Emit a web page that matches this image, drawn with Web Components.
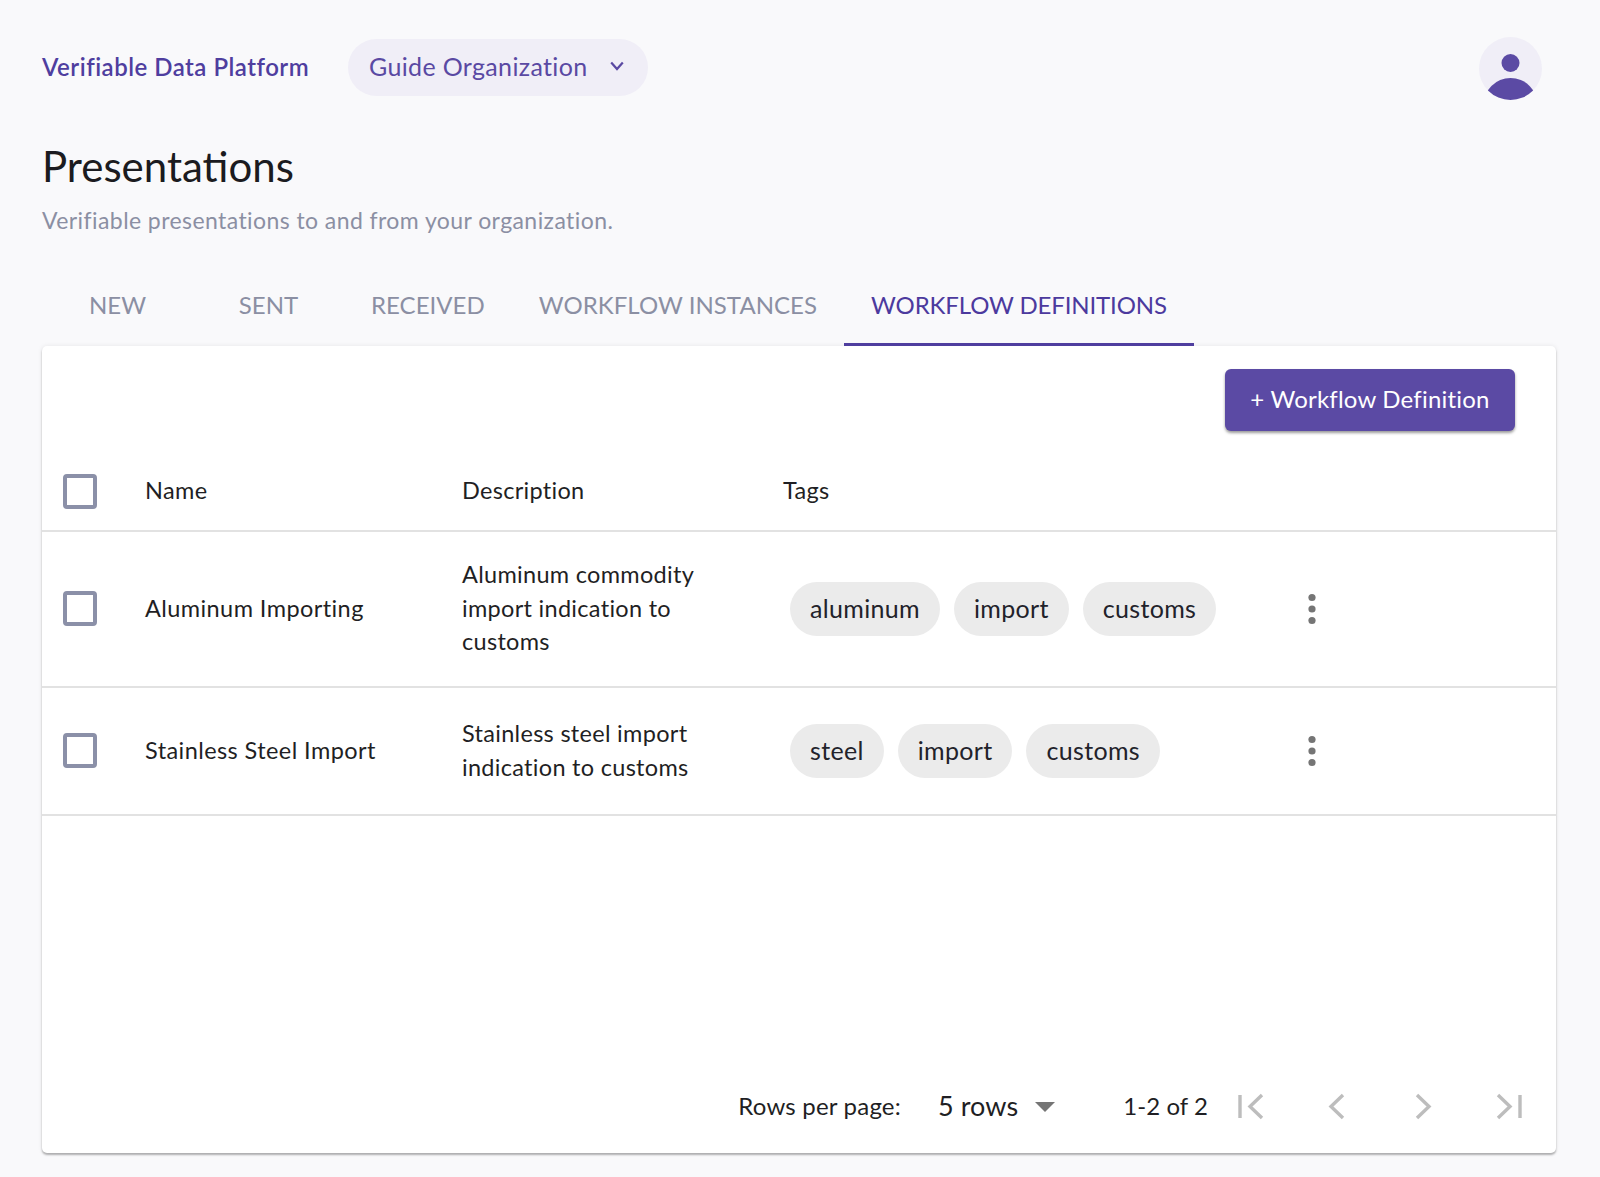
<!DOCTYPE html>
<html lang="en">
<head>
<meta charset="utf-8">
<title>Presentations</title>
<style>
  html, body { margin: 0; background: #f9f9fb; }
  body { font-family: Lato, "Noto Sans", sans-serif; color: #1c1c22; height: 1177px; overflow: hidden; }
</style>
</head>
<body>
<vdp-app>
  <top-bar brand="Verifiable Data Platform" org="Guide Organization"></top-bar>
  <page-heading title-text="Presentations">Verifiable presentations to and from your organization.</page-heading>
  <tab-bar>
    <tab-item>NEW</tab-item>
    <tab-item>SENT</tab-item>
    <tab-item>RECEIVED</tab-item>
    <tab-item>WORKFLOW INSTANCES</tab-item>
    <tab-item active>WORKFLOW DEFINITIONS</tab-item>
  </tab-bar>
  <data-card>
    <action-button slot="toolbar">+ Workflow Definition</action-button>
    <table-row header>
      <span slot="name">Name</span>
      <span slot="description">Description</span>
      <span slot="tags" class="tags-label">Tags</span>
    </table-row>
    <table-row tall>
      <span slot="name">Aluminum Importing</span>
      <span slot="description">Aluminum commodity import indication to customs</span>
      <tag-chip slot="tags">aluminum</tag-chip>
      <tag-chip slot="tags">import</tag-chip>
      <tag-chip slot="tags">customs</tag-chip>
    </table-row>
    <table-row>
      <span slot="name">Stainless Steel Import</span>
      <span slot="description">Stainless steel import indication to customs</span>
      <tag-chip slot="tags">steel</tag-chip>
      <tag-chip slot="tags">import</tag-chip>
      <tag-chip slot="tags">customs</tag-chip>
    </table-row>
    <table-pager slot="footer"></table-pager>
  </data-card>
</vdp-app>

<script>
// small helper so every element just declares its markup
function shadow(el, html) {
  el.attachShadow({ mode: "open" }).innerHTML = html;
}

class VdpApp extends HTMLElement {
  connectedCallback() {
    shadow(this, `
      <style>:host { display: block; }</style>
      <slot></slot>`);
  }
}

class TopBar extends HTMLElement {
  connectedCallback() {
    shadow(this, `
      <style>
        :host { display: flex; align-items: center; padding: 37px 58px 0 42px; }
        .brand { font-size: 24px; font-weight: 600; letter-spacing: .5px; padding-bottom: 5px; color: #4f3e9f; width: 306px; white-space: nowrap; }
        .org { display: flex; align-items: center; height: 57px; width: 300px; box-sizing: border-box; padding: 0 0 4px 21px; margin-top: -2px;
               border-radius: 29px; background: #f0eef7; color: #5a49a3; font-size: 25px; letter-spacing: .35px; white-space: nowrap; }
        .org svg { margin-left: auto; margin-right: 24px; }
        .avatar { margin-left: auto; display: block; }
      </style>
      <span class="brand">${this.getAttribute("brand")}</span>
      <div class="org">
        <span>${this.getAttribute("org")}</span>
        <svg width="14" height="10" viewBox="0 0 14 10"><path d="M1.2 1.5 7 8 12.8 1.5" fill="none" stroke="#5a49a3" stroke-width="2.2"/></svg>
      </div>
      <svg class="avatar" width="63" height="63" viewBox="0 0 63 63">
        <defs><clipPath id="c"><circle cx="31.5" cy="31.5" r="31.5"/></clipPath></defs>
        <circle cx="31.5" cy="31.5" r="31.5" fill="#f0eef7"/>
        <circle cx="31.5" cy="26" r="9" fill="#5b4aa4"/>
        <circle cx="31.5" cy="68" r="27" fill="#5b4aa4" clip-path="url(#c)"/>
      </svg>`);
  }
}

class PageHeading extends HTMLElement {
  connectedCallback() {
    shadow(this, `
      <style>
        :host { display: block; padding: 42px 42px 0; }
        h1 { margin: 0; font-size: 42px; line-height: 48px; font-weight: 400; color: #1b1b20; }
        p { margin: 14px 0 0; font-size: 23px; line-height: 32px; letter-spacing: .42px; color: #8b8fa3; }
      </style>
      <h1>${this.getAttribute("title-text")}</h1>
      <p><slot></slot></p>`);
  }
}

class TabBar extends HTMLElement {
  connectedCallback() {
    shadow(this, `
      <style>:host { display: flex; margin: 28px 42px 0; height: 82px; }</style>
      <slot></slot>`);
  }
}

class TabItem extends HTMLElement {
  connectedCallback() {
    shadow(this, `
      <style>
        :host { display: flex; align-items: center; justify-content: center; box-sizing: border-box; min-width: 151px;
                padding: 2px 27px 0; border-bottom: 3px solid transparent; font-size: 24px; letter-spacing: .04px; color: #8b8fa3; white-space: nowrap; }
        :host([active]) { color: #4c3a9e; border-bottom-color: #4f3e9f; letter-spacing: -.13px; }
      </style>
      <slot></slot>`);
  }
}

class DataCard extends HTMLElement {
  connectedCallback() {
    shadow(this, `
      <style>
        :host { display: flex; flex-direction: column; box-sizing: border-box; width: 1514px; height: 807px; margin-left: 42px;
                background: #fff; border-radius: 5px; box-shadow: 0 2px 2px rgba(0,0,0,.28), 0 0 5px rgba(0,0,0,.08); }
        .toolbar { display: flex; justify-content: flex-end; padding: 23px 41px 22px; }
        .footer { margin-top: auto; }
      </style>
      <div class="toolbar"><slot name="toolbar"></slot></div>
      <slot></slot>
      <div class="footer"><slot name="footer"></slot></div>`);
  }
}

class ActionButton extends HTMLElement {
  connectedCallback() {
    shadow(this, `
      <style>
        :host { display: flex; align-items: center; justify-content: center; box-sizing: border-box; width: 290px; height: 62px; padding-bottom: 3px;
                background: #5b4aa4; color: #fff; border-radius: 6px; font-size: 24px; letter-spacing: .2px; box-shadow: 0 2px 3px rgba(0,0,0,.4); white-space: nowrap; }
      </style>
      <slot></slot>`);
  }
}

class CheckBox extends HTMLElement {
  connectedCallback() {
    shadow(this, `
      <style>
        :host { display: block; box-sizing: border-box; width: 34px; height: 35px; border: 4px solid #8b90a8; border-radius: 4px; }
      </style>`);
  }
}

class KebabMenu extends HTMLElement {
  connectedCallback() {
    shadow(this, `
      <style>:host { display: block; width: 8px; height: 32px; }</style>
      <svg width="8" height="32" viewBox="0 0 8 32" style="display:block">
        <circle cx="4" cy="4.5" r="3.6" fill="#757575"/>
        <circle cx="4" cy="16" r="3.6" fill="#757575"/>
        <circle cx="4" cy="27.5" r="3.6" fill="#757575"/>
      </svg>`);
  }
}

class TableRow extends HTMLElement {
  connectedCallback() {
    const header = this.hasAttribute("header");
    shadow(this, `
      <style>
        :host { display: grid; grid-template-columns: 103px 317px 321px 509px 40px 1fr; align-items: center; box-sizing: border-box;
                height: 128px; padding-bottom: 1px; border-bottom: 2px solid #e2e2e2; font-size: 23.5px; line-height: 33.7px; letter-spacing: .3px; color: #1f1f24; }
        :host([tall]) { height: 156px; }
        :host([header]) { height: 79px; }
        .check { padding-left: 21px; }
        .name { letter-spacing: .42px; }
        .desc { width: 250px; }
        .tags { display: flex; gap: 14px; padding-left: 7px; }
        :host([header]) .tags { padding-left: 0; }
        .more { display: flex; justify-content: center; }
      </style>
      <div class="check"><check-box></check-box></div>
      <div class="name"><slot name="name"></slot></div>
      <div class="desc"><slot name="description"></slot></div>
      <div class="tags"><slot name="tags"></slot></div>
      <div class="more">${header ? "" : "<kebab-menu></kebab-menu>"}</div>`);
  }
}

class TagChip extends HTMLElement {
  connectedCallback() {
    shadow(this, `
      <style>
        :host { display: inline-flex; align-items: center; height: 54px; padding: 0 20px; border-radius: 27px;
                background: #ebebeb; color: #22222a; font-size: 25px; letter-spacing: .33px; white-space: nowrap; }
      </style>
      <slot></slot>`);
  }
}

class TablePager extends HTMLElement {
  connectedCallback() {
    const btn = (d) => `<div class="btn"><svg width="30" height="30" viewBox="0 0 30 30"><path d="${d}" fill="none" stroke="#bdbdbd" stroke-width="3.4"/></svg></div>`;
    shadow(this, `
      <style>
        :host { display: flex; align-items: center; justify-content: flex-end; height: 92px; padding: 0 4px 0 0; font-size: 24px; letter-spacing: .2px; color: #1f1f24; white-space: nowrap; }
        .txt { padding-bottom: 3px; }
        .size { margin-left: 37px; font-size: 27px; letter-spacing: .1px; }
        .caret { margin-left: 17px; width: 0; height: 0; border-left: 10px solid transparent; border-right: 10px solid transparent; border-top: 10px solid #757575; }
        .range { margin-left: 68px; font-size: 24px; letter-spacing: .05px; }
        .btn { width: 86px; display: flex; justify-content: center; }
        svg { display: block; }
      </style>
      <span class="txt">Rows per page:</span>
      <span class="txt size">5 rows</span>
      <span class="caret"></span>
      <span class="txt range">1-2 of 2</span>
      ${btn("M4 3V26M26 3 14 14.5 26 26")}
      ${btn("M21 3 9 14.5 21 26")}
      ${btn("M9 3 21 14.5 9 26")}
      ${btn("M4 3 16 14.5 4 26M26 3V26")}`);
  }
}

customElements.define("check-box", CheckBox);
customElements.define("kebab-menu", KebabMenu);
customElements.define("tag-chip", TagChip);
customElements.define("table-row", TableRow);
customElements.define("table-pager", TablePager);
customElements.define("action-button", ActionButton);
customElements.define("data-card", DataCard);
customElements.define("tab-item", TabItem);
customElements.define("tab-bar", TabBar);
customElements.define("page-heading", PageHeading);
customElements.define("top-bar", TopBar);
customElements.define("vdp-app", VdpApp);
</script>
</body>
</html>
